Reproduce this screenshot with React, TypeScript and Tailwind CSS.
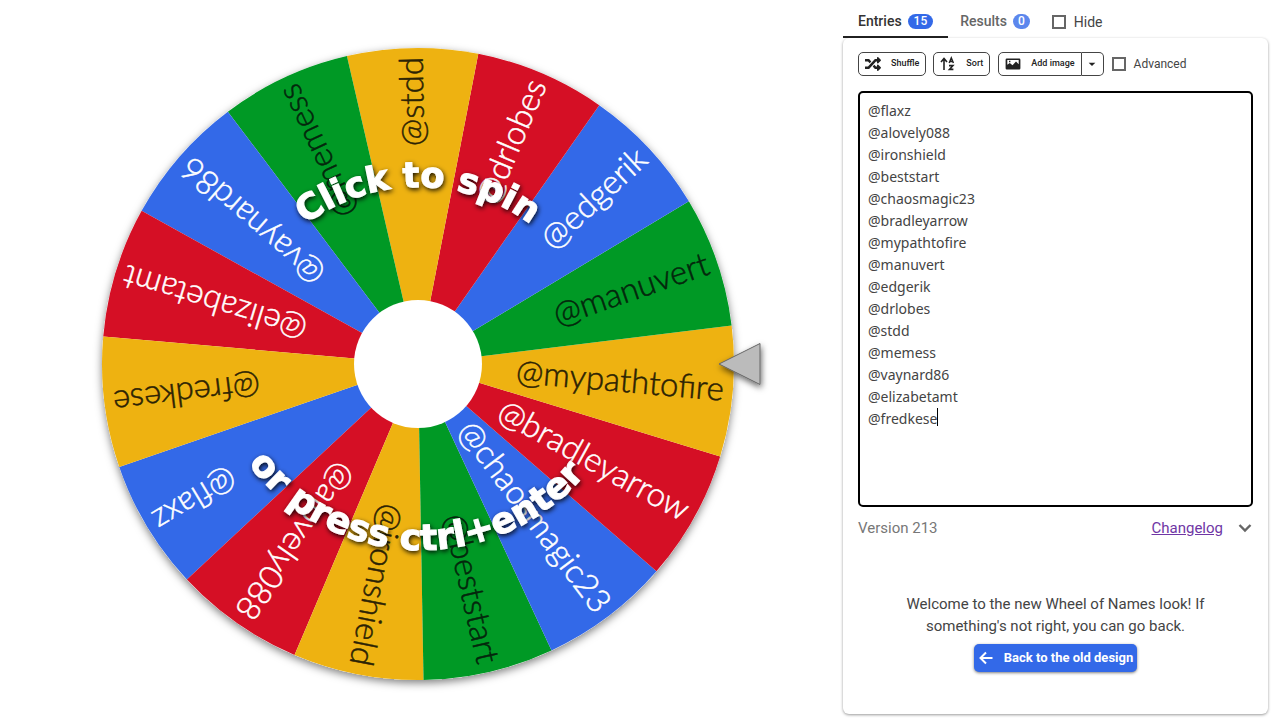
import { FaRandom } from "react-icons/fa"
import { MdArrowDropDown } from "react-icons/md"

const entries = [
  "@flaxz",
  "@alovely088",
  "@ironshield",
  "@beststart",
  "@chaosmagic23",
  "@bradleyarrow",
  "@mypathtofire",
  "@manuvert",
  "@edgerik",
  "@drlobes",
  "@stdd",
  "@memess",
  "@vaynard86",
  "@elizabetamt",
  "@fredkese",
]

const sliceColors = [
  { fill: "#3369e8", text: "#ffffff" },
  { fill: "#d50f25", text: "#ffffff" },
  { fill: "#eeb211", text: "#2b2204" },
  { fill: "#009925", text: "#04260c" },
]

const cx = 418
const cy = 364
const radius = 316
const sliceAngle = 360 / entries.length
const startAngle = 149

function pointAt(angle: number) {
  const rad = (angle * Math.PI) / 180
  return `${cx + radius * Math.cos(rad)} ${cy + radius * Math.sin(rad)}`
}

function Wheel() {
  return (
    <svg viewBox="0 0 843 725" className="block h-auto w-full cursor-pointer" role="img" aria-label="Wheel of names">
      <defs>
        <filter id="wheelShadow" x="-10%" y="-10%" width="120%" height="120%">
          <feDropShadow dx="0" dy="3" stdDeviation="4" floodColor="#000" floodOpacity="0.5" />
        </filter>
        <filter id="pointerShadow" x="-50%" y="-50%" width="200%" height="200%">
          <feDropShadow dx="1" dy="3" stdDeviation="3" floodColor="#000" floodOpacity="0.6" />
        </filter>
        <filter id="textShadow" x="-20%" y="-20%" width="140%" height="140%">
          <feDropShadow dx="1" dy="2" stdDeviation="2.5" floodColor="#000" floodOpacity="0.9" />
        </filter>
        <path id="arcTop" d="M229 376 A189 189 0 0 1 607 376" />
        <path id="arcBottom" d="M205 334 A216 216 0 0 0 637 334" />
      </defs>

      <circle cx={cx} cy={cy} r={radius} fill="#fff" filter="url(#wheelShadow)" />
      {entries.map((name, i) => {
        const mid = startAngle - i * sliceAngle
        const color = sliceColors[i % sliceColors.length]
        return (
          <g key={name}>
            <path
              d={`M${cx} ${cy} L${pointAt(mid - sliceAngle / 2)} A${radius} ${radius} 0 0 1 ${pointAt(mid + sliceAngle / 2)} Z`}
              fill={color.fill}
            />
            <text
              x={cx + 307}
              y={cy}
              dy="10"
              textAnchor="end"
              transform={`rotate(${mid} ${cx} ${cy})`}
              fill={color.text}
              stroke={color.text}
              strokeWidth="0.5"
              className="font-['Lato',sans-serif] text-[33px] font-light"
            >
              {name}
            </text>
          </g>
        )
      })}
      <circle cx={cx} cy={cy} r="64" fill="#fff" />

      <g
        fill="#fff"
        stroke="#fff"
        strokeWidth="1"
        textAnchor="middle"
        filter="url(#textShadow)"
        className="font-['DejaVu_Sans',sans-serif] text-[35px] font-bold"
      >
        <text>
          <textPath href="#arcTop" startOffset="50%">
            Click to spin
          </textPath>
        </text>
        <text className="text-[36px]">
          <textPath href="#arcBottom" startOffset="49%">
            or press ctrl+enter
          </textPath>
        </text>
      </g>

      <path d="M719 364 L760 343.5 V384.5 Z" fill="#bbb" stroke="#666" strokeWidth="1" filter="url(#pointerShadow)" />
    </svg>
  )
}

function SortIcon() {
  return (
    <svg viewBox="0 0 16 16" className="size-4" fill="none" stroke="currentColor" aria-hidden="true">
      <path d="M4 14V3M1 6L4 2.5L7 6" strokeWidth="1.6" />
      <path d="M9.2 7L11.3 2L13.4 7M9.8 5.5H12.8" strokeWidth="1.5" />
      <path d="M9 9.7H12.8L9.6 13.3H13.4" strokeWidth="1.7" />
    </svg>
  )
}

function ImageIcon() {
  return (
    <svg viewBox="0 0 16 16" className="size-4" fill="currentColor" fillRule="evenodd" aria-hidden="true">
      <path d="M1.8 2.5h12.4a1.2 1.2 0 0 1 1.2 1.2v8.6a1.2 1.2 0 0 1-1.2 1.2H1.8a1.2 1.2 0 0 1-1.2-1.2V3.7A1.2 1.2 0 0 1 1.8 2.5ZM2.3 4v4.8L4.8 7l2.7 2.3L11 5.5l2.7 2.8V4ZM4 4.8h1.4v1.4H4Z" />
    </svg>
  )
}

function ArrowLeftIcon() {
  return (
    <svg viewBox="0 0 16 16" className="size-4" fill="none" stroke="currentColor" strokeWidth="2" aria-hidden="true">
      <path d="M14.5 8H3M8 2.5L2.5 8L8 13.5" />
    </svg>
  )
}

function ChevronDownIcon() {
  return (
    <svg viewBox="0 0 16 16" className="size-4" fill="none" stroke="currentColor" strokeWidth="2.4" aria-hidden="true">
      <path d="M2.5 5L8 10.5L13.5 5" />
    </svg>
  )
}

export default function App() {
  return (
    <main className="grid min-h-screen grid-cols-[minmax(0,1fr)_425px] bg-white pr-3 font-['Roboto',sans-serif] text-[#444]">
      <Wheel />

      <aside className="flex min-h-screen flex-col pb-[11px]">
        <div className="flex h-[38px] items-stretch text-sm">
          <button className="flex items-center gap-1.5 border-b-2 border-[#222] px-[15px] pt-1.5 font-medium text-[#333]">
            Entries
            <span className="rounded-full bg-[#3369e8] px-1.5 text-xs leading-[15px] text-white">15</span>
          </button>
          <button className="flex items-center gap-1.5 px-3 pt-1.5 pb-0.5 font-medium text-[#666]">
            Results
            <span className="rounded-full bg-[#5c87ed] px-[5px] text-xs leading-[15px] text-white">0</span>
          </button>
          <label className="ml-2.5 flex items-center gap-2 pt-1.5">
            <input type="checkbox" className="size-3.5 appearance-none border-2 border-[#666] bg-white" />
            Hide
          </label>
        </div>

        <section className="flex flex-1 flex-col rounded-md px-[15px] pt-3.5 shadow-[0_1px_3px_rgba(0,0,0,0.4)]">
          <div className="flex h-6 items-stretch text-[9px] font-medium text-[#222]">
            <button className="flex items-center gap-2.5 rounded-[5px] border border-[#444] px-1.5">
              <FaRandom className="size-4" />
              Shuffle
            </button>
            <button className="ml-[7px] flex items-center gap-2.5 rounded-[5px] border border-[#444] px-1.5">
              <SortIcon />
              Sort
            </button>
            <button className="ml-2 flex items-center gap-2.5 rounded-l-[5px] border border-[#444] px-1.5">
              <ImageIcon />
              Add image
            </button>
            <button
              aria-label="More image options"
              className="flex w-[22px] items-center justify-center rounded-r-[5px] border border-l-0 border-[#444]"
            >
              <MdArrowDropDown className="size-4" />
            </button>
            <label className="ml-2 flex items-center gap-2 text-xs font-normal text-[#444]">
              <input type="checkbox" className="size-3.5 appearance-none border-2 border-[#666] bg-white" />
              Advanced
            </label>
          </div>

          <div className="relative mt-[15px]">
            <textarea
              aria-label="Entries"
              spellCheck={false}
              defaultValue={entries.join("\n")}
              className="block h-[416px] w-full resize-none rounded-[5px] border-2 border-black px-2 py-[7px] font-['Noto_Sans',sans-serif] text-sm leading-[22px] text-[#444] outline-none"
            />
            <span className="absolute top-[317px] left-[79px] h-[18px] w-px bg-black" />
          </div>

          <div className="mt-2.5 flex items-center text-[15px] leading-[22px]">
            <span className="text-[#777]">Version 213</span>
            <a href="#changelog" className="ml-auto text-[#6f36a5] underline">
              Changelog
            </a>
            <button aria-label="Show changelog" className="ml-3.5 text-[#666]">
              <ChevronDownIcon />
            </button>
          </div>

          <div className="mt-[54px] flex flex-col items-center">
            <p className="max-w-[320px] text-center text-[15px] leading-[22px]">
              Welcome to the new Wheel of Names look! If something's not right, you can go back.
            </p>
            <button className="mt-[7px] flex h-7 items-center gap-2.5 rounded-[5px] bg-[#3369e8] px-1 text-[13px] font-bold text-white shadow-[0_1px_3px_rgba(0,0,0,0.5)]">
              <ArrowLeftIcon />
              Back to the old design
            </button>
          </div>
        </section>
      </aside>
    </main>
  )
}
